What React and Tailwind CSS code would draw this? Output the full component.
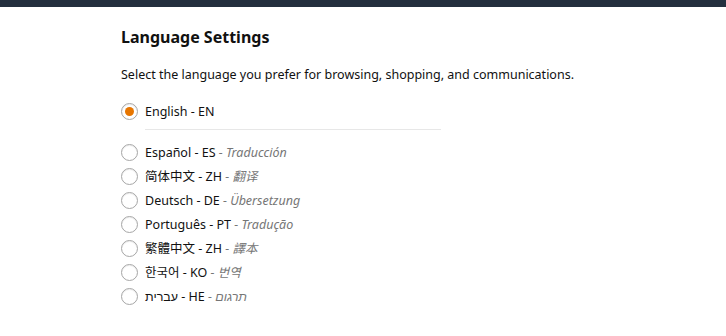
import React from "react";

const langs = [
  { name: "Español", code: "ES", tr: "Traducción" },
  { name: "简体中文", code: "ZH", tr: "翻译" },
  { name: "Deutsch", code: "DE", tr: "Übersetzung" },
  { name: "Português", code: "PT", tr: "Tradução" },
  { name: "繁體中文", code: "ZH", tr: "譯本" },
  { name: "한국어", code: "KO", tr: "번역" },
  { name: "עברית", code: "HE", tr: "תרגום" },
];

function Radio({ checked }) {
  return (
    <span className="flex h-[17px] w-[17px] shrink-0 items-center justify-center rounded-full border border-[#a6a6a6] bg-white shadow-[inset_0_1px_1px_rgba(0,0,0,0.08)]">
      {checked && <span className="h-[9px] w-[9px] rounded-full bg-[#e77600]" />}
    </span>
  );
}

export default function App() {
  return (
    <div
      className="min-h-[336px] bg-white text-[#111]"
      style={{ fontFamily: '"Noto Sans", "Noto Sans CJK SC", "Noto Sans CJK KR", sans-serif' }}
    >
      <div className="h-[7px] bg-[#232f3e]" />
      <div className="pl-[121px] pt-[18px]">
        <h1 className="text-[16px] font-bold leading-[24px]">Language Settings</h1>
        <p className="mt-[16px] text-[12.5px] leading-[19px]">
          Select the language you prefer for browsing, shopping, and communications.
        </p>
        <label className="mt-[18px] flex items-center gap-[7px] text-[12.5px] leading-[19px]">
          <Radio checked />
          <span>English - EN</span>
        </label>
        <div className="ml-[24px] mt-[8px] h-px w-[296px] bg-[#e7e7e7]" />
        <div className="mt-[13px] flex flex-col gap-[5px]">
          {langs.map((l, i) => (
            <label key={i} className="flex items-center gap-[7px] text-[12.5px] leading-[19px]">
              <Radio />
              <span>
                {l.name} - {l.code}
                <span className="italic text-[#767676]"> - {l.tr}</span>
              </span>
            </label>
          ))}
        </div>
      </div>
    </div>
  );
}
